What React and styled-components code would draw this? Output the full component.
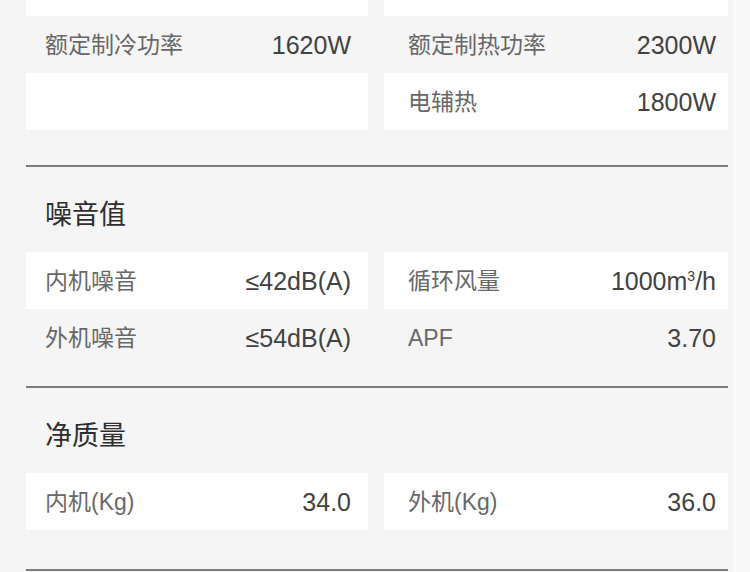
import React from "react";
import styled, { createGlobalStyle } from "styled-components";

const Global = createGlobalStyle`
  html, body { margin: 0; padding: 0; background: #f5f5f5; }
  body { font-family: "Liberation Sans", "Noto Sans CJK SC", sans-serif; overflow: hidden; }
`;

const Page = styled.div`
  width: 750px;
  height: 572px;
  overflow: hidden;
  display: flex;
  background: #f5f5f5;
`;

const Main = styled.div`
  width: 702px;
  padding-left: 26px;
  margin-top: -41px;
  display: flex;
  flex-direction: column;
`;

const RightStrip = styled.div`
  flex: 1;
  margin-left: 5px;
  background: #f9f9f9;
`;

const Section = styled.section`
  display: flex;
  flex-direction: column;
  padding-bottom: ${(p) => p.$after}px;
  border-bottom: 2px solid #7c7c7c;
`;

const Title = styled.h3`
  margin: 0;
  padding: 30px 0 23px 19px;
  height: 32px;
  line-height: 32px;
  font-size: 27px;
  font-weight: 400;
  color: #2e2e2e;
  font-family: "Noto Sans CJK SC", sans-serif;
`;

const Grid = styled.div`
  display: grid;
  grid-template-columns: 342px 344px;
  column-gap: 16px;
`;

const Row = styled.div`
  height: 57px;
  display: flex;
  align-items: center;
  justify-content: space-between;
  padding: ${(p) => (p.$right ? "0 12px 0 24px" : "0 17px 0 19px")};
  background: ${(p) => (p.$white ? "#ffffff" : "transparent")};
`;

const Label = styled.span`
  font-size: 23px;
  line-height: 30px;
  color: #686868;
  font-family: "Liberation Sans", "Noto Sans CJK SC", sans-serif;
`;

const Value = styled.span`
  font-size: 25px;
  line-height: 30px;
  color: #424242;
  font-family: "Liberation Sans", "Noto Sans CJK SC", sans-serif;
`;

const Sup = styled.sup`
  font-size: 14px;
  vertical-align: 9px;
  line-height: 0;
`;

const Cell = ({ white, right, label, value }) => (
  <Row $white={white} $right={right}>
    <Label>{label}</Label>
    <Value>{value}</Value>
  </Row>
);

export default function App() {
  return (
    <Page>
      <Global />
      <Main>
        <Section $after={35}>
          <Grid>
            <Cell white />
            <Cell white right />
            <Cell label="额定制冷功率" value="1620W" />
            <Cell right label="额定制热功率" value="2300W" />
            <Cell white />
            <Cell white right label="电辅热" value="1800W" />
          </Grid>
        </Section>
        <Section $after={20}>
          <Title>噪音值</Title>
          <Grid>
            <Cell white label="内机噪音" value="≤42dB(A)" />
            <Cell
              white
              right
              label="循环风量"
              value={
                <>
                  1000m<Sup>3</Sup>/h
                </>
              }
            />
            <Cell label="外机噪音" value="≤54dB(A)" />
            <Cell right label="APF" value="3.70" />
          </Grid>
        </Section>
        <Section $after={39}>
          <Title>净质量</Title>
          <Grid>
            <Cell white label="内机(Kg)" value="34.0" />
            <Cell white right label="外机(Kg)" value="36.0" />
          </Grid>
        </Section>
      </Main>
      <RightStrip />
    </Page>
  );
}
